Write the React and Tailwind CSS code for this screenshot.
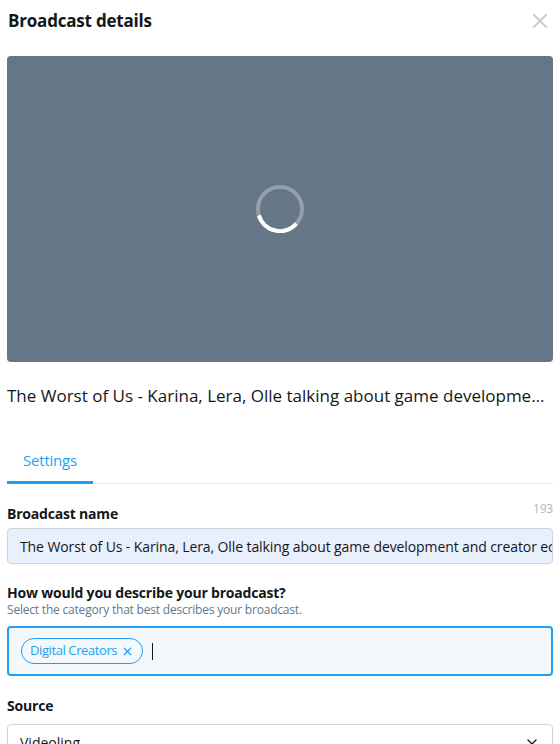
import { ChevronDown, X } from 'lucide-react';

const Spinner = () => (
  <svg width="52" height="52" viewBox="0 0 52 52">
    <circle cx="26" cy="26" r="22" fill="none" stroke="rgba(255,255,255,0.3)" strokeWidth="4" />
    <path d="M 4.9 32.4 A 22 22 0 0 0 42.4 40.7" fill="none" stroke="#ffffff" strokeWidth="4" />
  </svg>
);

export default function App() {
  return (
    <div className="w-[560px] h-[744px] overflow-hidden bg-white text-[#14171a] font-['Open_Sans',sans-serif] px-[7px]">
      <div className="flex items-center justify-between h-[40px] pt-[1px]">
        <h2 className="text-[17px] font-bold leading-none pl-[1px] tracking-[-0.2px]">Broadcast details</h2>
        <X className="w-[24px] h-[24px] text-[#c3ced6] mr-[1px]" strokeWidth={2} />
      </div>

      <div className="mt-[16px] h-[306px] rounded-[4px] bg-[#657786] flex items-center justify-center">
        <Spinner />
      </div>

      <p className="mt-[22px] text-[17px] leading-[24px] truncate">
        The Worst of Us - Karina, Lera, Olle talking about game development and creator economy
      </p>

      <div className="mt-[32px] flex border-b border-[#e6ecf0]">
        <div className="w-[86px] h-[44px] flex items-center justify-center text-[15px] text-[#1da1f2] border-b-[3px] border-[#1da1f2] mb-[-1px] tracking-[-0.2px]">
          Settings
        </div>
      </div>

      <div className="mt-[17px]">
        <div className="flex items-end justify-between">
          <label className="text-[14px] font-bold leading-[18px] tracking-[-0.2px]">Broadcast name</label>
          <span className="text-[12px] text-[#aab8c2] leading-[16px] mb-[6px] tracking-[-0.2px]">193</span>
        </div>
        <div className="mt-[5px] h-[36px] rounded-[4px] border border-[#ccd6dd] bg-[#e8f0fe] flex items-center px-[12px] overflow-hidden">
          <span className="text-[14px] whitespace-nowrap tracking-[-0.1px]">
            The Worst of Us - Karina, Lera, Olle talking about game development and creator economy
          </span>
        </div>
      </div>

      <div className="mt-[20px]">
        <label className="block text-[14px] font-bold leading-[18px] tracking-[-0.2px]">How would you describe your broadcast?</label>
        <p className="text-[12px] text-[#657786] leading-[16px] tracking-[-0.2px]">Select the category that best describes your broadcast.</p>
        <div className="mt-[8px] h-[50px] rounded-[4px] border-2 border-[#1da1f2] bg-[#f5f8fa] flex items-center px-[12px] gap-[9px]">
          <span className="flex items-center gap-[4px] h-[26px] px-[8px] rounded-full border border-[#1da1f2] text-[#1da1f2] text-[13px] tracking-[-0.4px]">
            Digital Creators
            <X className="w-[13px] h-[13px]" strokeWidth={2.2} />
          </span>
          <span className="w-[1px] h-[17px] bg-[#14171a]" />
        </div>
      </div>

      <div className="mt-[21px]">
        <label className="block text-[14px] font-bold leading-[18px] tracking-[-0.2px]">Source</label>
        <div className="mt-[9px] h-[36px] rounded-[4px] border border-[#ccd6dd] flex items-center justify-between px-[12px]">
          <span className="text-[14px]">Videoling</span>
          <ChevronDown className="w-[16px] h-[16px] text-[#14171a]" />
        </div>
      </div>
    </div>
  );
}
